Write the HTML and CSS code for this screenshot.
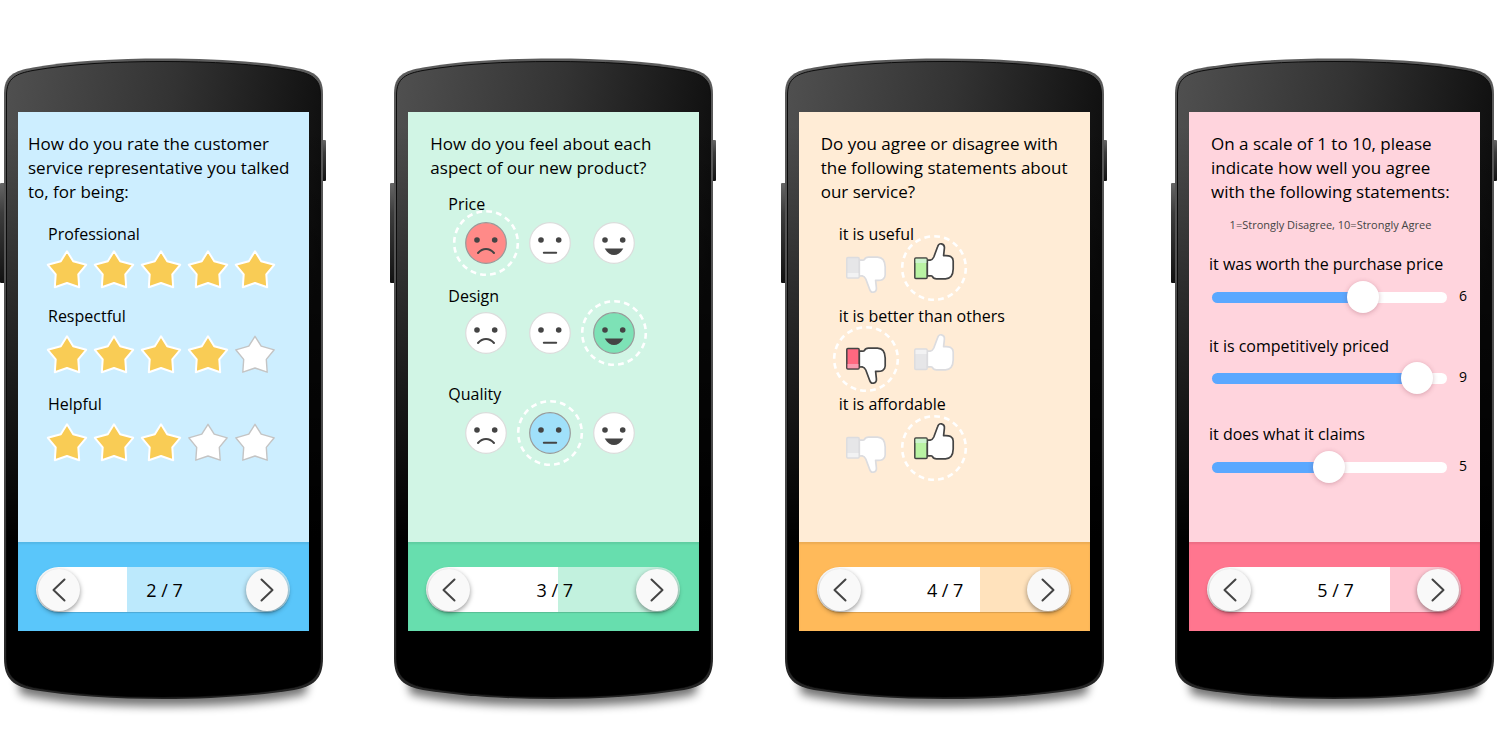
FILE: index.html
```html
<!DOCTYPE html>
<html lang="en">
<head>
<meta charset="utf-8">
<meta name="viewport" content="width=device-width, initial-scale=1">
<title>Mobile survey question types</title>
<link rel="stylesheet" href="styles.css">
</head>
<body>
<svg class="sprite" aria-hidden="true">
  <defs>
    <linearGradient id="glass" x1="0" y1="0" x2="1" y2="0.3">
      <stop offset="0" stop-color="#505050"/><stop offset="0.5" stop-color="#333"/><stop offset="1" stop-color="#0c0c0c"/>
    </linearGradient>
    <linearGradient id="fade" x1="0" y1="0" x2="0" y2="1">
      <stop offset="0.1" stop-color="#000" stop-opacity="0"/><stop offset="0.75" stop-color="#000"/>
    </linearGradient>
    <linearGradient id="rim" x1="0" y1="0" x2="0" y2="1">
      <stop offset="0" stop-color="#5c5c5c"/><stop offset="0.6" stop-color="#4a4a4a"/><stop offset="1" stop-color="#222"/>
    </linearGradient>
    <linearGradient id="key" x1="0" y1="0" x2="0" y2="1">
      <stop offset="0" stop-color="#666"/><stop offset="0.3" stop-color="#3c3c3c"/><stop offset="1" stop-color="#111"/>
    </linearGradient>
    <filter id="soft" x="-20%" y="-100%" width="140%" height="300%"><feGaussianBlur stdDeviation="5"/></filter>
  </defs>
  <symbol id="handset" viewBox="0 56 326 664" preserveAspectRatio="none">
    <path d="M18 675C60 688 110 690 163 690S266 688 308 675L306 694C266 704 210 706 163 706S60 704 20 694Z" fill="#000" opacity="0.55" filter="url(#soft)"/>
    <rect x="0" y="183" width="6" height="100" rx="1" fill="url(#key)"/>
    <rect x="320" y="140" width="6" height="41" rx="1" fill="url(#key)"/>
    <path d="M4 94C4 75 14 71 33 67.5C70 61 115 58.5 163 58.5S256 61 294 67.5C313 71 323 75 323 94V658C323 680 313 686 294 690C256 696 210 699 163 699S70 696 33 690C14 686 4 680 4 658Z" fill="url(#rim)"/>
    <path d="M6.5 95C6.5 78 16 73.5 34 70.3C70 64 115 61.5 163 61.5S256 64 293 70.3C311 73.5 320.5 78 320.5 95V657C320.5 677 311 683.5 293 687.5C256 694 210 697 163 697S70 694 34 687.5C16 683.5 6.5 677 6.5 657Z" fill="url(#glass)" stroke="#0d0d0d"/>
    <path d="M6.5 95C6.5 78 16 73.5 34 70.3C70 64 115 61.5 163 61.5S256 64 293 70.3C311 73.5 320.5 78 320.5 95V657C320.5 677 311 683.5 293 687.5C256 694 210 697 163 697S70 694 34 687.5C16 683.5 6.5 677 6.5 657Z" fill="url(#fade)"/>
  </symbol>
  <symbol id="star" viewBox="-21 -21 42 42">
    <path d="M0 -18.7L6.2 -8.8L19.2 -5.2L11.3 4.4L12.2 17.2L0 13L-12.2 17.2L-11.3 4.4L-19.2 -5.2L-6.2 -8.8Z" stroke-linejoin="round"/>
  </symbol>
  <symbol id="sad" viewBox="-21 -21 42 42">
    <circle r="20.3"/>
    <g class="ink-fill"><circle cx="-9" cy="-3" r="2.8"/><circle cx="8.7" cy="-3" r="2.8"/></g>
    <path class="ink-line" d="M-8 10Q-4.5 5.9 0 5.9T8 10"/>
  </symbol>
  <symbol id="neutral" viewBox="-21 -21 42 42">
    <circle r="20.3"/>
    <g class="ink-fill"><circle cx="-9" cy="-3" r="2.8"/><circle cx="8.7" cy="-3" r="2.8"/></g>
    <path class="ink-line" d="M-6.2 9.7H6.2"/>
  </symbol>
  <symbol id="happy" viewBox="-21 -21 42 42">
    <circle r="20.3"/>
    <g class="ink-fill"><circle cx="-9" cy="-3" r="2.8"/><circle cx="8.7" cy="-3" r="2.8"/><path d="M-9.3 5.4H9.3C6.5 10 3.5 12 0 12S-6.5 10 -9.3 5.4Z"/></g>
  </symbol>
  <symbol id="hand" viewBox="-26 -26 52 52">
    <path class="skin" d="M-6.7 -8L-3.8 -7.8Q-1.5 -8.2 -0.2 -11L3.6 -21.2Q4.6 -24.6 7.4 -24.2Q10.8 -23.4 10.4 -19.8L9.6 -12.3Q18.9 -13.2 19.2 -7L19.2 1Q18.9 10.6 11.5 10.8H2.5Q-0.5 10.8 -1.5 8.6Q-2.3 7.6 -3.5 7.8H-6.7Z"/>
    <rect class="cuff" x="-19.2" y="-10" width="12.3" height="20.5" rx="1"/>
    <path class="strip" d="M-18.4 -9.2H-7.6V-5H-18.4Z"/>
  </symbol>
  <symbol id="ring" viewBox="-34 -34 68 68">
    <circle r="31.8" fill="none" stroke="#fff" stroke-width="2.6" stroke-dasharray="5.8 4.19"/>
  </symbol>
  <symbol id="prev" viewBox="0 0 14 24"><path d="M12.5 1.5L1.5 12L12.5 22.5"/></symbol>
  <symbol id="next" viewBox="0 0 14 24"><path d="M1.5 1.5L12.5 12L1.5 22.5"/></symbol>
</svg>

<main class="showcase">
  <section class="phone phone--blue">
    <svg class="handset" aria-hidden="true"><use href="#handset"/></svg>
    <form class="screen">
      <div class="content">
        <h2 class="title">How do you rate the customer service representative you talked to, for being:</h2>
        <div class="question stars-first" role="radiogroup" aria-labelledby="q-professional">
          <h3 class="label" id="q-professional">Professional</h3>
          <div class="row stars">
            <label class="choice on"><input type="radio" name="professional" aria-label="1 star"><svg><use href="#star"/></svg></label>
            <label class="choice on"><input type="radio" name="professional" aria-label="2 stars"><svg><use href="#star"/></svg></label>
            <label class="choice on"><input type="radio" name="professional" aria-label="3 stars"><svg><use href="#star"/></svg></label>
            <label class="choice on"><input type="radio" name="professional" aria-label="4 stars"><svg><use href="#star"/></svg></label>
            <label class="choice on"><input type="radio" name="professional" aria-label="5 stars" checked><svg><use href="#star"/></svg></label>
          </div>
        </div>
        <div class="question" role="radiogroup" aria-labelledby="q-respectful">
          <h3 class="label" id="q-respectful">Respectful</h3>
          <div class="row stars">
            <label class="choice on"><input type="radio" name="respectful" aria-label="1 star"><svg><use href="#star"/></svg></label>
            <label class="choice on"><input type="radio" name="respectful" aria-label="2 stars"><svg><use href="#star"/></svg></label>
            <label class="choice on"><input type="radio" name="respectful" aria-label="3 stars"><svg><use href="#star"/></svg></label>
            <label class="choice on"><input type="radio" name="respectful" aria-label="4 stars" checked><svg><use href="#star"/></svg></label>
            <label class="choice"><input type="radio" name="respectful" aria-label="5 stars"><svg><use href="#star"/></svg></label>
          </div>
        </div>
        <div class="question" role="radiogroup" aria-labelledby="q-helpful">
          <h3 class="label" id="q-helpful">Helpful</h3>
          <div class="row stars">
            <label class="choice on"><input type="radio" name="helpful" aria-label="1 star"><svg><use href="#star"/></svg></label>
            <label class="choice on"><input type="radio" name="helpful" aria-label="2 stars"><svg><use href="#star"/></svg></label>
            <label class="choice on"><input type="radio" name="helpful" aria-label="3 stars" checked><svg><use href="#star"/></svg></label>
            <label class="choice"><input type="radio" name="helpful" aria-label="4 stars"><svg><use href="#star"/></svg></label>
            <label class="choice"><input type="radio" name="helpful" aria-label="5 stars"><svg><use href="#star"/></svg></label>
          </div>
        </div>
      </div>
      <footer class="footer">
        <nav class="pager" style="--done: 36%">
          <button class="arrow" type="button" aria-label="Previous"><svg><use href="#prev"/></svg></button>
          <span class="count">2 / 7</span>
          <button class="arrow" type="button" aria-label="Next"><svg><use href="#next"/></svg></button>
        </nav>
      </footer>
    </form>
  </section>

  <section class="phone phone--green">
    <svg class="handset" aria-hidden="true"><use href="#handset"/></svg>
    <form class="screen">
      <div class="content">
        <h2 class="title">How do you feel about each aspect of our new product?</h2>
        <div class="question" role="radiogroup" aria-labelledby="q-price">
          <h3 class="label" id="q-price">Price</h3>
          <div class="row faces">
            <label class="choice picked sad"><input type="radio" name="price" aria-label="Unhappy" checked><svg class="ring"><use href="#ring"/></svg><svg><use href="#sad"/></svg></label>
            <label class="choice"><input type="radio" name="price" aria-label="Neutral"><svg><use href="#neutral"/></svg></label>
            <label class="choice"><input type="radio" name="price" aria-label="Happy"><svg><use href="#happy"/></svg></label>
          </div>
        </div>
        <div class="question" role="radiogroup" aria-labelledby="q-design">
          <h3 class="label" id="q-design">Design</h3>
          <div class="row faces">
            <label class="choice"><input type="radio" name="design" aria-label="Unhappy"><svg><use href="#sad"/></svg></label>
            <label class="choice"><input type="radio" name="design" aria-label="Neutral"><svg><use href="#neutral"/></svg></label>
            <label class="choice picked happy"><input type="radio" name="design" aria-label="Happy" checked><svg class="ring"><use href="#ring"/></svg><svg><use href="#happy"/></svg></label>
          </div>
        </div>
        <div class="question" role="radiogroup" aria-labelledby="q-quality">
          <h3 class="label" id="q-quality">Quality</h3>
          <div class="row faces">
            <label class="choice"><input type="radio" name="quality" aria-label="Unhappy"><svg><use href="#sad"/></svg></label>
            <label class="choice picked neutral"><input type="radio" name="quality" aria-label="Neutral" checked><svg class="ring"><use href="#ring"/></svg><svg><use href="#neutral"/></svg></label>
            <label class="choice"><input type="radio" name="quality" aria-label="Happy"><svg><use href="#happy"/></svg></label>
          </div>
        </div>
      </div>
      <footer class="footer">
        <nav class="pager" style="--done: 52%">
          <button class="arrow" type="button" aria-label="Previous"><svg><use href="#prev"/></svg></button>
          <span class="count">3 / 7</span>
          <button class="arrow" type="button" aria-label="Next"><svg><use href="#next"/></svg></button>
        </nav>
      </footer>
    </form>
  </section>

  <section class="phone phone--orange">
    <svg class="handset" aria-hidden="true"><use href="#handset"/></svg>
    <form class="screen">
      <div class="content">
        <h2 class="title">Do you agree or disagree with the following statements about our service?</h2>
        <div class="question" role="radiogroup" aria-labelledby="q-useful">
          <h3 class="label" id="q-useful">it is useful</h3>
          <div class="row thumbs">
            <label class="choice down"><input type="radio" name="useful" aria-label="Disagree"><svg><use href="#hand"/></svg></label>
            <label class="choice up picked"><input type="radio" name="useful" aria-label="Agree" checked><svg class="ring"><use href="#ring"/></svg><svg><use href="#hand"/></svg></label>
          </div>
        </div>
        <div class="question" role="radiogroup" aria-labelledby="q-better">
          <h3 class="label" id="q-better">it is better than others</h3>
          <div class="row thumbs">
            <label class="choice down picked"><input type="radio" name="better" aria-label="Disagree" checked><svg class="ring"><use href="#ring"/></svg><svg><use href="#hand"/></svg></label>
            <label class="choice up"><input type="radio" name="better" aria-label="Agree"><svg><use href="#hand"/></svg></label>
          </div>
        </div>
        <div class="question" role="radiogroup" aria-labelledby="q-affordable">
          <h3 class="label" id="q-affordable">it is affordable</h3>
          <div class="row thumbs">
            <label class="choice down"><input type="radio" name="affordable" aria-label="Disagree"><svg><use href="#hand"/></svg></label>
            <label class="choice up picked"><input type="radio" name="affordable" aria-label="Agree" checked><svg class="ring"><use href="#ring"/></svg><svg><use href="#hand"/></svg></label>
          </div>
        </div>
      </div>
      <footer class="footer">
        <nav class="pager" style="--done: 64%">
          <button class="arrow" type="button" aria-label="Previous"><svg><use href="#prev"/></svg></button>
          <span class="count">4 / 7</span>
          <button class="arrow" type="button" aria-label="Next"><svg><use href="#next"/></svg></button>
        </nav>
      </footer>
    </form>
  </section>

  <section class="phone phone--pink">
    <svg class="handset" aria-hidden="true"><use href="#handset"/></svg>
    <form class="screen">
      <div class="content">
        <h2 class="title">On a scale of 1 to 10, please indicate how well you agree with the following statements:</h2>
        <p class="hint">1=Strongly Disagree, 10=Strongly Agree</p>
        <div class="question">
          <label class="label" for="s-worth">it was worth the purchase price</label>
          <div class="row scale">
            <input class="slider" id="s-worth" type="range" min="1" max="10" step="0.1" value="7" style="--fill: 65%">
            <output class="value" for="s-worth">6</output>
          </div>
        </div>
        <div class="question">
          <label class="label" for="s-priced">it is competitively priced</label>
          <div class="row scale">
            <input class="slider" id="s-priced" type="range" min="1" max="10" step="0.1" value="9.4" style="--fill: 88%">
            <output class="value" for="s-priced">9</output>
          </div>
        </div>
        <div class="question">
          <label class="label" for="s-claims">it does what it claims</label>
          <div class="row scale">
            <input class="slider" id="s-claims" type="range" min="1" max="10" step="0.1" value="5.5" style="--fill: 50%">
            <output class="value" for="s-claims">5</output>
          </div>
        </div>
      </div>
      <footer class="footer">
        <nav class="pager" style="--done: 72%">
          <button class="arrow" type="button" aria-label="Previous"><svg><use href="#prev"/></svg></button>
          <span class="count">5 / 7</span>
          <button class="arrow" type="button" aria-label="Next"><svg><use href="#next"/></svg></button>
        </nav>
      </footer>
    </form>
  </section>
</main>
</body>
</html>
```

FILE: styles.css
```css
* {
  box-sizing: border-box;
}

body {
  margin: 0;
  background: #fff;
  color: #000;
  font-family: "Open Sans", "Noto Sans", sans-serif;
}

.sprite {
  position: absolute;
  width: 0;
  height: 0;
}

.showcase {
  display: flex;
  justify-content: space-between;
  padding: 56px 4px 16px 0;
}

/* Phone shell */
.phone {
  position: relative;
  flex: 0 1 326px;
  padding: 56px 17px 89px 18px;
}

.handset {
  position: absolute;
  inset: 0;
  width: 100%;
  height: 100%;
  overflow: visible;
}

.screen {
  position: relative;
  display: flex;
  flex-direction: column;
  background: var(--page);
}

.phone--blue {
  --page: #cdeeff;
  --bar: #5ac6fa;
  --rest: #bce9fc;
  --title-inset: 10px;
  --label-inset: 30px;
}

.phone--green {
  --page: #d1f5e5;
  --bar: #67deae;
  --rest: #c2f1de;
  --title-inset: 22px;
  --label-inset: 40px;
}

.phone--orange {
  --page: #ffecd6;
  --bar: #ffba5a;
  --rest: #ffe2bc;
  --title-inset: 22px;
  --label-inset: 40px;
}

.phone--pink {
  --page: #ffd4dd;
  --bar: #ff768f;
  --rest: #ffc6d2;
  --title-inset: 22px;
  --label-inset: 20px;
}

/* Survey content */
.content {
  min-height: 430px;
  padding-top: 20px;
}

.title {
  margin: 0;
  padding: 0 16px 0 var(--title-inset);
  font-size: 17px;
  font-weight: 400;
  line-height: 24px;
}

.label {
  display: block;
  margin: 0;
  padding-left: var(--label-inset);
  font-size: 16px;
  font-weight: 400;
  line-height: 24px;
}

.hint {
  margin: 12px 0 0;
  padding-right: 8px;
  color: #444;
  font-size: 11px;
  line-height: 18px;
  text-align: center;
}

.row {
  display: flex;
  align-items: center;
}

.phone--blue .question { margin-top: 10px; }
.phone--blue .stars-first { margin-top: 18px; }
.phone--green .question:nth-child(2) { margin-top: 12px; }
.phone--green .question:nth-child(3) { margin-top: 14px; }
.phone--green .question:nth-child(4) { margin-top: 24px; }
.phone--orange .question:nth-child(2) { margin-top: 18px; }
.phone--orange .question:nth-child(3) { margin-top: 15px; }
.phone--orange .question:nth-child(4) { margin-top: 2px; }
.phone--pink .question { margin-top: 18px; }
.phone--pink .question:nth-child(4) { margin-top: 16px; }
.phone--pink .question:nth-child(5) { margin-top: 24px; }

.choice {
  position: relative;
  display: block;
  cursor: pointer;
}

.choice input {
  position: absolute;
  inset: 0;
  margin: 0;
  opacity: 0;
}

.choice svg {
  display: block;
  width: 100%;
  height: 100%;
}

.choice .ring {
  position: absolute;
  inset: 50% auto auto 50%;
  width: 68px;
  height: 68px;
  margin: -34px 0 0 -34px;
}

/* Stars */
.stars {
  gap: 5px;
  height: 54px;
  padding-left: 28px;
}

.stars-first .stars {
  height: 48px;
}

.stars .choice {
  width: 42px;
  height: 42px;
  fill: #fff;
  stroke: #c4c4c4;
  stroke-width: 1.4px;
}

.stars .on {
  fill: #f9cc55;
  stroke: #fff;
  stroke-width: 2px;
}

/* Faces */
.faces {
  gap: 22px;
  height: 54px;
  padding-left: 57px;
}

.question:nth-child(3) .faces {
  height: 50px;
}

.faces .choice {
  width: 42px;
  height: 42px;
  fill: #fff;
  stroke: #dcdcdc;
  stroke-width: 1.2px;
}

.faces .picked { stroke: #999; }
.faces .sad { fill: #ff8a88; }
.faces .neutral { fill: #a0e0fa; }
.faces .happy { fill: #7de2b6; }

.ink-fill {
  fill: #444;
  stroke: none;
}

.ink-line {
  fill: none;
  stroke: #444;
  stroke-width: 2px;
  stroke-linecap: round;
}

/* Thumbs */
.thumbs {
  gap: 16px;
  height: 43px;
  padding-left: 41px;
}

.question:nth-child(3) .thumbs { height: 62px; }
.question:nth-child(4) .thumbs { height: 64px; }

.thumbs .choice {
  --line: #dcdcdf;
  --cuff: #e6e6e8;
  --strip: #f2f2f3;
  width: 52px;
  height: 52px;
}

.thumbs .picked { --line: #444; }
.thumbs .up.picked { --cuff: #b9f3a3; --strip: #cdf3cf; }
.thumbs .down.picked { --cuff: #ff6880; --strip: #f99bb0; }
.thumbs .down > svg:last-child { transform: scaleY(-1); }

.skin {
  fill: #fff;
  stroke: var(--line);
  stroke-width: 1.7px;
  stroke-linejoin: round;
}

.cuff {
  fill: var(--cuff);
  stroke: var(--line);
  stroke-width: 1.5px;
}

.strip {
  fill: var(--strip);
}

/* Sliders */
.scale {
  gap: 12px;
  height: 42px;
  padding: 0 11px 0 23px;
}

.question:nth-child(4) .scale { height: 40px; }

.slider {
  flex: 1;
  min-width: 0;
  height: 32px;
  margin: 0;
  appearance: none;
  background: transparent;
}

.slider::-webkit-slider-runnable-track {
  height: 11px;
  border-radius: 6px;
  background: linear-gradient(to right, #5aa8ff var(--fill), #fff var(--fill));
}

.slider::-webkit-slider-thumb {
  width: 32px;
  height: 32px;
  margin-top: -11px;
  appearance: none;
  border-radius: 50%;
  background: #fff;
  box-shadow: 0 1px 5px rgba(120, 40, 60, 0.3);
}

.value {
  width: 10px;
  padding-bottom: 2px;
  font-size: 14px;
  line-height: 20px;
}

/* Progress bar and navigation */
.footer {
  padding: 25px 19px 19px 18px;
  background: var(--bar);
  box-shadow: inset 0 2px 2px rgba(0, 0, 0, 0.08);
}

.pager {
  display: flex;
  align-items: center;
  justify-content: space-between;
  height: 45px;
  padding: 0 2px;
  border-radius: 23px;
  background: linear-gradient(to right, #fff var(--done), var(--rest) var(--done));
  box-shadow: 0 1px 1px rgba(0, 0, 0, 0.15);
}

.count {
  padding-left: 3px;
  font-size: 18px;
  line-height: 24px;
}

.arrow {
  display: grid;
  place-items: center;
  width: 42px;
  height: 42px;
  padding: 0;
  border: 0;
  border-radius: 50%;
  background: #f9f9f9;
  box-shadow: 0 2px 5px rgba(0, 0, 0, 0.4);
}

.arrow svg {
  width: 14px;
  height: 24px;
  fill: none;
  stroke: #444;
  stroke-width: 2px;
  stroke-linecap: round;
  stroke-linejoin: round;
}

@media (max-width: 1320px) {
  .showcase {
    flex-wrap: wrap;
    justify-content: center;
    gap: 24px;
  }
}
```
